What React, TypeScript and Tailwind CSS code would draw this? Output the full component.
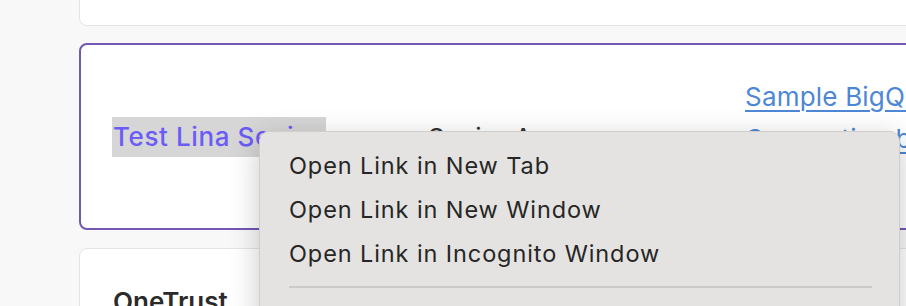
import React from 'react';

const menuItems = ['Open Link in New Tab', 'Open Link in New Window', 'Open Link in Incognito Window'];

export default function App() {
  return (
    <div className="relative w-[906px] h-[306px] overflow-hidden bg-[#f8f8f8]" style={{ fontFamily: 'Inter, "Noto Sans", sans-serif' }}>
      <div className="flex flex-col pl-[79px]">
        {/* top card (only its bottom edge is visible) */}
        <div className="w-[900px] h-[26px] bg-white border border-t-0 border-[#e2e5e7] rounded-b-[8px]" />

        {/* selected row card */}
        <div className="mt-[17px] w-[900px] h-[187px] bg-white border-2 border-[#7257b3] rounded-[8px] flex items-center pl-[31px]">
          <div className="w-[316px] shrink-0">
            <span className="inline-block bg-[#d6d6d6] pl-[1px] pr-[5px] leading-[40px] text-[26px] font-medium tracking-[0.6px] text-[#6c5cf7]">
              Test Lina Senior
            </span>
          </div>
          <div className="w-[317px] shrink-0 pt-[2px] text-[26px] text-[#333] leading-[40px]">Senior Ages</div>
          <div className="flex flex-col text-[26px] tracking-[0.2px] leading-[42px] text-[#4d87d6] whitespace-nowrap mt-[4px]">
            <span className="underline underline-offset-[4px] decoration-[2px]">Sample BigQuery</span>
            <span className="underline underline-offset-[4px] decoration-[2px]">Connection by</span>
            <span className="underline underline-offset-[4px] decoration-[2px]">Admin</span>
          </div>
        </div>

        {/* next card */}
        <div className="mt-[18px] w-[900px] h-[120px] bg-white border border-[#e2e5e7] rounded-[8px] pl-[33px] pt-[33px]">
          <span className="text-[26px] font-semibold text-[#2b2b2b]">OneTrust</span>
        </div>
      </div>

      {/* context menu */}
      <div className="absolute left-[259px] top-[131px] w-[641px] h-[220px] bg-[#e4e3e2] border border-[#cfcecd] rounded-[10px] shadow-[0_8px_30px_rgba(0,0,0,0.22)] pt-[12px] pl-[29px] pr-[27px]">
        {menuItems.map((item) => (
          <div key={item} className="h-[44px] flex items-center text-[23.5px] tracking-[0.9px] text-[#262626]">
            {item}
          </div>
        ))}
        <div className="mt-[10px] h-[2px] bg-[#cbcac9]" />
      </div>
    </div>
  );
}
